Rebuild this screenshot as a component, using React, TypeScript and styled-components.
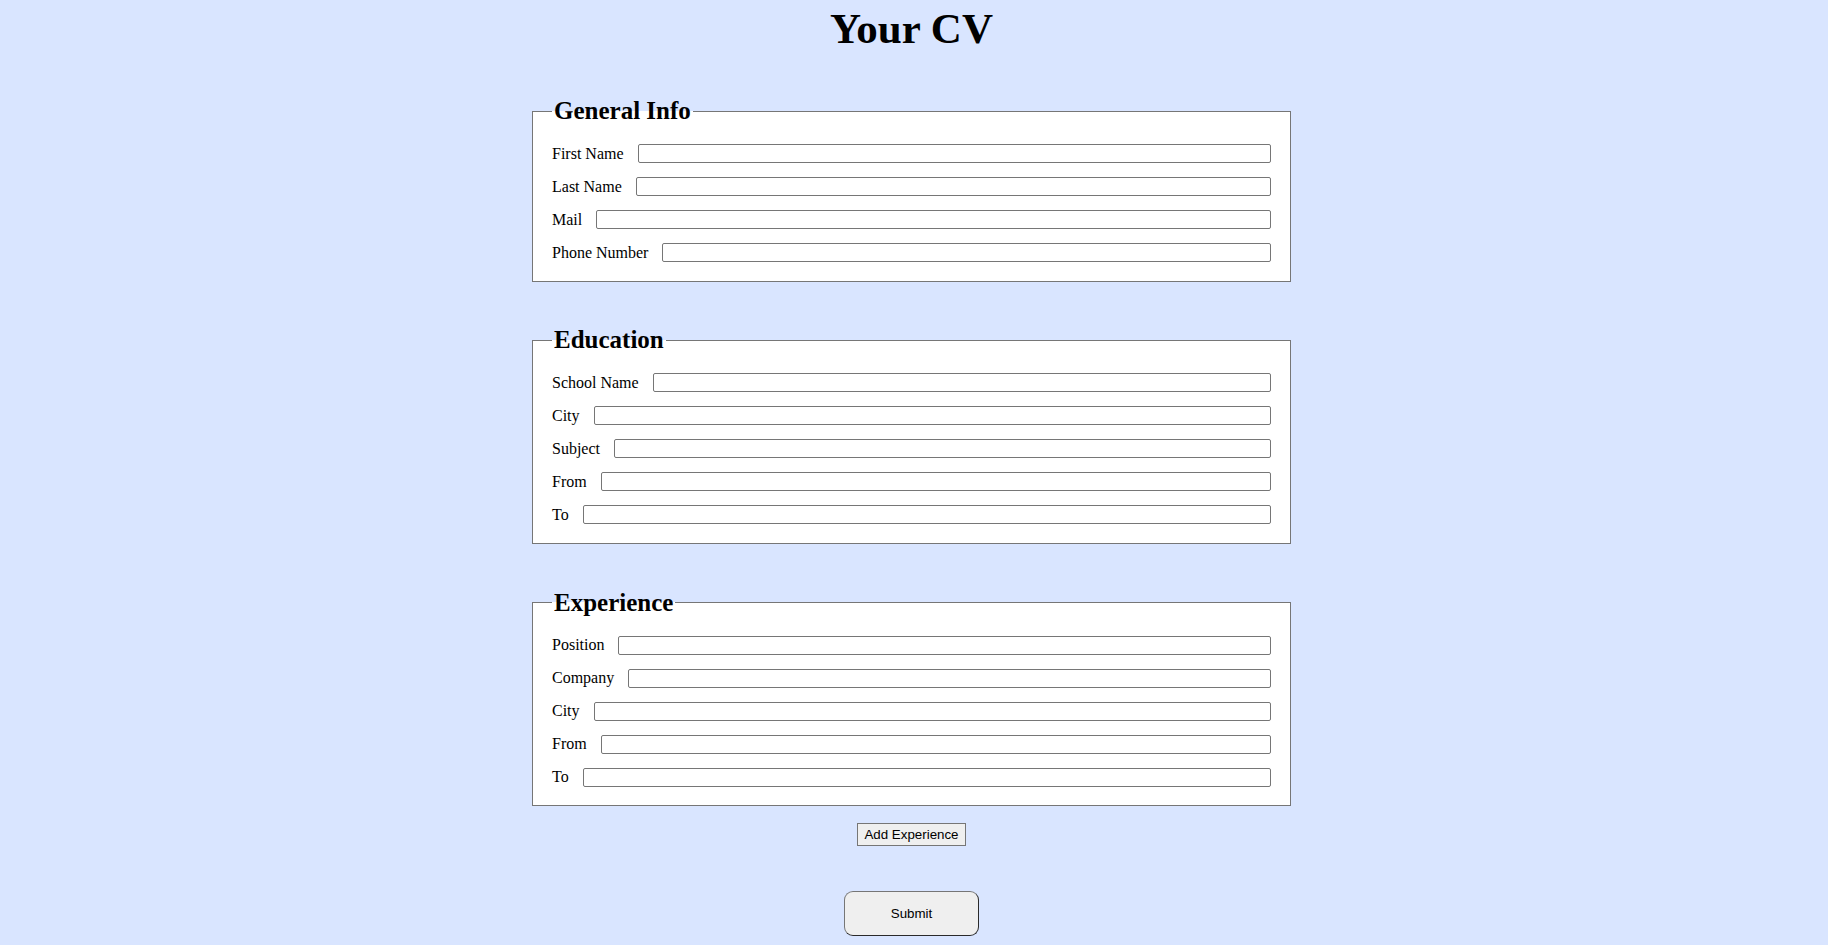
import React from 'react';
import styled, { createGlobalStyle } from 'styled-components';

const GlobalStyle = createGlobalStyle`
    html, body {
        margin: 0;
        padding: 0;
        background: #d9e5ff;
    }
    body {
        font-family: "Liberation Serif", "Times New Roman", serif;
    }
`;

const Page = styled.div`
    min-height: 100vh;
    box-sizing: border-box;
    padding: 4px 13px 0 8px;
    display: flex;
    flex-direction: column;
    align-items: center;
`;

const Title = styled.h1`
    margin: 0;
    font-size: 43px;
    font-weight: bold;
    color: #000;
`;

const Section = styled.fieldset`
    box-sizing: border-box;
    width: 759px;
    margin: 44.8px 0 0;
    padding: 19px 19px 18.5px;
    border: 1px solid #767676;
    background: #fff;
    display: flex;
    flex-direction: column;
    gap: 14px;

    &:first-of-type {
        margin-top: 44px;
    }
`;

const Legend = styled.legend`
    padding: 0 2px;
    font-size: 25px;
    font-weight: bold;
    color: #000;
`;

const Row = styled.div`
    display: flex;
    align-items: center;
    gap: 14px;
`;

const Label = styled.label`
    font-size: 16px;
    color: #000;
    white-space: nowrap;
`;

const Input = styled.input`
    flex: 1;
    min-width: 0;
    box-sizing: border-box;
    height: 19px;
    padding: 1px 2px;
    border: 1px solid #767676;
    border-radius: 2px;
    background: #fff;
    font: 13.33px Arial, "Liberation Sans", sans-serif;
`;

const Button = styled.button<{ $big?: boolean }>`
    box-sizing: border-box;
    background: #efefef;
    color: #000;
    font: 13.33px Arial, "Liberation Sans", sans-serif;
    cursor: pointer;
    margin-top: ${(p) => (p.$big ? '45.5px' : '17px')};
    width: ${(p) => (p.$big ? '134.5px' : 'auto')};
    height: ${(p) => (p.$big ? '44.5px' : '22.5px')};
    padding: 0 6px;
    border: 1px solid #767676;
    border-radius: ${(p) => (p.$big ? '9px' : '0')};
    ${(p) => p.$big && 'border-color: #767676 #2a2a2a #2a2a2a #767676;'}
`;

type Field = string;

const sections: { title: string; fields: Field[] }[] = [
    { title: 'General Info', fields: ['First Name', 'Last Name', 'Mail', 'Phone Number'] },
    { title: 'Education', fields: ['School Name', 'City', 'Subject', 'From', 'To'] },
    { title: 'Experience', fields: ['Position', 'Company', 'City', 'From', 'To'] },
];

export default function App() {
    return (
        <>
            <GlobalStyle />
            <Page>
                <Title>Your CV</Title>
                {sections.map((s) => (
                    <Section key={s.title}>
                        <Legend>{s.title}</Legend>
                        {s.fields.map((f) => {
                            const id = `${s.title}-${f}`.replace(/\s+/g, '-');
                            return (
                                <Row key={f}>
                                    <Label htmlFor={id}>{f}</Label>
                                    <Input id={id} type="text" />
                                </Row>
                            );
                        })}
                    </Section>
                ))}
                <Button type="button">Add Experience</Button>
                <Button type="submit" $big>Submit</Button>
            </Page>
        </>
    );
}
